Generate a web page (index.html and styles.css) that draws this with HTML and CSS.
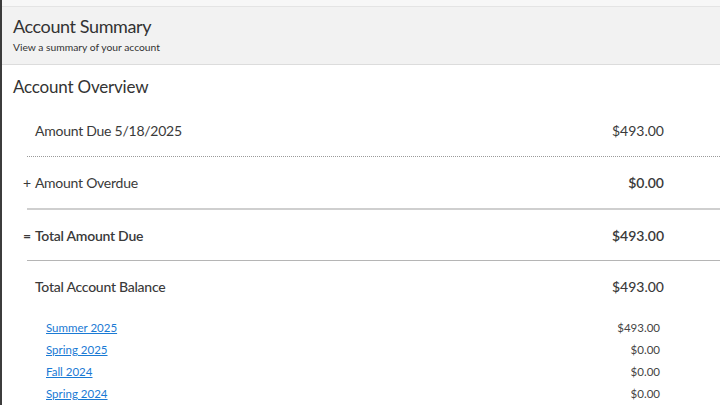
FILE: index.html
```html
<!DOCTYPE html>
<html>
<head>
<meta charset="utf-8">
<link rel="stylesheet" href="styles.css">
</head>
<body>
<div class="page">
  <div class="topstrip"></div>
  <header class="header">
    <h1 class="title">Account Summary</h1>
    <p class="subtitle">View a summary of your account</p>
  </header>
  <section class="overview">
    <h2 class="section-title">Account Overview</h2>
    <div class="rows">
      <div class="row row-dotted">
        <span class="label">Amount Due 5/18/2025</span>
        <span class="amount">$493.00</span>
      </div>
      <div class="row row-thick">
        <span class="label"><span class="op">+</span>Amount Overdue</span>
        <span class="amount strong">$0.00</span>
      </div>
      <div class="row row-thin">
        <span class="label strong"><span class="op">=</span>Total Amount Due</span>
        <span class="amount strong">$493.00</span>
      </div>
      <div class="row row-last">
        <span class="label medium">Total Account Balance</span>
        <span class="amount medium">$493.00</span>
      </div>
      <div class="terms">
        <div class="term"><a href="#">Summer 2025</a><span class="term-amt">$493.00</span></div>
        <div class="term"><a href="#">Spring 2025</a><span class="term-amt">$0.00</span></div>
        <div class="term"><a href="#">Fall 2024</a><span class="term-amt">$0.00</span></div>
        <div class="term"><a href="#">Spring 2024</a><span class="term-amt">$0.00</span></div>
      </div>
    </div>
  </section>
</div>
</body>
</html>
```
FILE: styles.css
```css
html, body {
  margin: 0;
  padding: 0;
  background: #ffffff;
}
body {
  font-family: "Lato", "Noto Sans", sans-serif;
  color: #333;
  height: 405px;
  overflow: hidden;
}
.page {
  border-left: 2px solid #3c3c3c;
  min-height: 405px;
}
.topstrip {
  height: 6px;
  background: #f7f7f7;
  border-bottom: 1px solid #e4e4e4;
}
.header {
  background: #f2f2f2;
  border-bottom: 1px solid #dcdcdc;
  padding: 8px 11px 11px;
  height: 38px;
}
.title {
  margin: 0;
  font-size: 18px;
  font-weight: 400;
  line-height: 22px;
  letter-spacing: -0.4px;
  color: #333;
}
.subtitle {
  margin: 4px 0 0;
  font-size: 10.3px;
  line-height: 13px;
  color: #333;
}
.section-title {
  margin: 0;
  padding: 11px 11px 0;
  font-size: 17px;
  font-weight: 400;
  line-height: 22px;
  letter-spacing: -0.2px;
  color: #333;
}
.rows {
  margin-left: 25px;
  margin-top: 6px;
}
.row {
  display: flex;
  justify-content: space-between;
  align-items: center;
  height: 52px;
  padding: 0 56px 0 8px;
  font-size: 14px;
  color: #3a3a3a;
}
.label { letter-spacing: -0.25px; }
.row-dotted { border-bottom: 1px dotted #9a9a9a; }
.row-thick { border-bottom: 2px solid #cfcfcf; height: 51px; }
.row-thin { border-bottom: 1px solid #b5b5b5; height: 50px; }
.row-last { height: 50px; }
.op {
  margin-left: -12px;
  margin-right: 4px;
}
.strong { font-weight: 600; }
.medium { font-weight: 500; }
.terms {
  padding: 5px 60px 0 19px;
}
.term {
  display: flex;
  justify-content: space-between;
  align-items: center;
  height: 22px;
  font-size: 11.5px;
}
.term a {
  color: #1a7ad4;
  text-decoration: underline;
}
.term-amt {
  color: #444;
}
```
